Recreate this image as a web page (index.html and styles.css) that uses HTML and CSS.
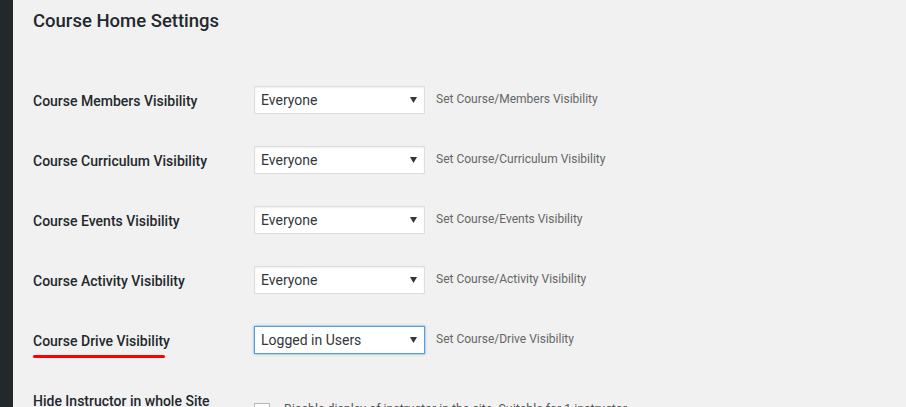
FILE: index.html
```html
<!DOCTYPE html>
<html>
<head>
<meta charset="utf-8">
<link rel="stylesheet" href="styles.css">
</head>
<body>
<div class="layout">
  <div class="sidebar"></div>
  <main class="content">
    <h2 class="title">Course Home Settings</h2>
    <div class="form">
      <div class="row">
        <div class="label">Course Members Visibility</div>
        <div class="field">
          <div class="select"><span>Everyone</span><svg class="arrow" width="7" height="6" viewBox="0 0 7 6"><path d="M0 0H7L3.5 6Z"/></svg></div>
          <span class="desc">Set Course/Members Visibility</span>
        </div>
      </div>
      <div class="row">
        <div class="label">Course Curriculum Visibility</div>
        <div class="field">
          <div class="select"><span>Everyone</span><svg class="arrow" width="7" height="6" viewBox="0 0 7 6"><path d="M0 0H7L3.5 6Z"/></svg></div>
          <span class="desc">Set Course/Curriculum Visibility</span>
        </div>
      </div>
      <div class="row">
        <div class="label">Course Events Visibility</div>
        <div class="field">
          <div class="select"><span>Everyone</span><svg class="arrow" width="7" height="6" viewBox="0 0 7 6"><path d="M0 0H7L3.5 6Z"/></svg></div>
          <span class="desc">Set Course/Events Visibility</span>
        </div>
      </div>
      <div class="row">
        <div class="label">Course Activity Visibility</div>
        <div class="field">
          <div class="select"><span>Everyone</span><svg class="arrow" width="7" height="6" viewBox="0 0 7 6"><path d="M0 0H7L3.5 6Z"/></svg></div>
          <span class="desc">Set Course/Activity Visibility</span>
        </div>
      </div>
      <div class="row">
        <div class="label"><span class="marked">Course Drive Visibility</span></div>
        <div class="field">
          <div class="select focus"><span>Logged in Users</span><svg class="arrow" width="7" height="6" viewBox="0 0 7 6"><path d="M0 0H7L3.5 6Z"/></svg></div>
          <span class="desc">Set Course/Drive Visibility</span>
        </div>
      </div>
      <div class="row">
        <div class="label">Hide Instructor in whole Site</div>
        <div class="field check">
          <span class="checkbox"></span>
          <span class="desc dark">Disable display of instructor in the site. Suitable for 1 instructor</span>
        </div>
      </div>
    </div>
  </main>
</div>
</body>
</html>
```
FILE: styles.css
```css
html, body {
  margin: 0;
  padding: 0;
  background: #f1f1f1;
  height: 100%;
  overflow: hidden;
}
body {
  font-family: Roboto, "Open Sans", sans-serif;
  color: #23282d;
}
.layout {
  display: flex;
  min-height: 407px;
}
.sidebar {
  width: 13px;
  flex: none;
  background: #23282d;
}
.content {
  padding-left: 20px;
  flex: 1;
}
.title {
  margin: 0 0 24px;
  padding-top: 9px;
  font-size: 18.5px;
  font-weight: 500;
  line-height: 25px;
  height: 38px;
}
.form {
  display: flex;
  flex-direction: column;
}
.row {
  display: grid;
  grid-template-columns: 221px 1fr;
  height: 60px;
}
.label {
  padding-top: 21px;
  font-size: 14px;
  font-weight: 500;
  line-height: 19px;
}
.marked {
  position: relative;
  display: inline-block;
}
.marked::after {
  content: "";
  position: absolute;
  left: 0;
  top: 23px;
  width: 132px;
  height: 3px;
  border-radius: 2px;
  background: #f00;
}
.field {
  padding-top: 15px;
  display: flex;
  align-items: flex-start;
  gap: 11px;
}
.select {
  box-sizing: border-box;
  width: 171px;
  height: 28px;
  background: #fff;
  border: 1px solid #ddd;
  box-shadow: inset 0 1px 2px rgba(0,0,0,.07);
  display: flex;
  align-items: center;
  justify-content: space-between;
  padding: 0 7px 0 6px;
  font-size: 14px;
  color: #32373c;
}
.select.focus {
  border-color: #5b9dd9;
  box-shadow: 0 0 2px rgba(30,140,190,.8);
}
.arrow {
  fill: #32373c;
}
.desc {
  font-size: 12px;
  color: #666;
  line-height: 26px;
}
.field.check {
  padding-top: 32px;
  gap: 14px;
}
.checkbox {
  box-sizing: border-box;
  width: 16px;
  height: 16px;
  border: 1px solid #b4b9be;
  background: #fff;
  flex: none;
}
.desc.dark {
  color: #555;
  font-size: 12.3px;
  line-height: 16px;
  margin-top: -2px;
}
```
